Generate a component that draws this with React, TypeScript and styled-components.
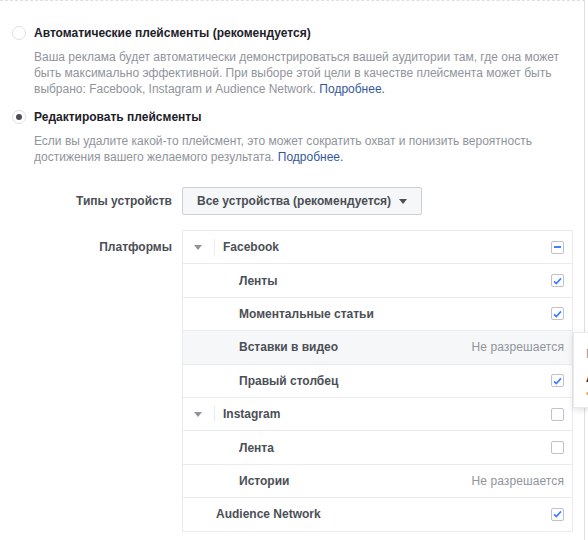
import React from 'react';
import styled, { createGlobalStyle } from 'styled-components';

const GlobalStyle = createGlobalStyle`
  html, body {
    margin: 0;
    padding: 0;
    background: #fff;
    overflow: hidden;
  }
  body {
    font-family: "Liberation Sans", Arial, Helvetica, sans-serif;
    font-size: 12px;
    color: #1d2129;
  }
`;

const Card = styled.div`
  position: relative;
  width: 585px;
  height: 540px;
  box-sizing: border-box;
  border-top: 1px dashed #dddfe2;
  border-right: 1px solid #dddfe2;
  padding-top: 24px;
`;

const Option = styled.div<{ gap?: number }>`
  display: flex;
  flex-direction: column;
  padding-left: 34px;
  margin-top: ${p => p.gap ?? 0}px;
`;

const OptionHead = styled.label`
  position: relative;
  display: flex;
  align-items: center;
  height: 16px;
  line-height: 16px;
  font-weight: bold;
  color: #1d2129;
`;

const Radio = styled.span<{ checked?: boolean }>`
  position: absolute;
  left: -22px;
  top: 1px;
  width: 12px;
  height: 12px;
  border-radius: 50%;
  border: 1px solid #dddfe2;
  background: #fff;
  display: flex;
  align-items: center;
  justify-content: center;

  &::after {
    content: '';
    display: ${p => (p.checked ? 'block' : 'none')};
    width: 6px;
    height: 6px;
    border-radius: 50%;
    background: #4b4f56;
  }
`;

const Description = styled.div`
  margin-top: 8px;
  line-height: 16px;
  color: #90949c;
  padding-right: 12px;
`;

const Link = styled.a`
  color: #365899;
  text-decoration: none;
`;

const FormRow = styled.div<{ gap?: number }>`
  display: flex;
  align-items: flex-start;
  gap: 10px;
  margin-top: ${p => p.gap ?? 0}px;
`;

const FieldLabel = styled.div<{ top?: number }>`
  width: 172px;
  flex-shrink: 0;
  text-align: right;
  font-weight: bold;
  color: #4b4f56;
  line-height: 16px;
  padding-top: ${p => p.top ?? 0}px;
`;

const Dropdown = styled.button`
  display: flex;
  align-items: center;
  justify-content: flex-start;
  gap: 8px;
  height: 28px;
  box-sizing: border-box;
  padding: 0 14px;
  border: 1px solid #ccd0d5;
  border-radius: 2px;
  background: #f6f7f9;
  font-family: inherit;
  font-size: 12px;
  font-weight: bold;
  color: #4b4f56;
  white-space: nowrap;
  cursor: pointer;
`;

const DownCaret = styled.span<{ color?: string }>`
  width: 0;
  height: 0;
  border-left: 4.5px solid transparent;
  border-right: 4.5px solid transparent;
  border-top: 5px solid ${p => p.color ?? '#4b4f56'};
`;

const Table = styled.div`
  width: 391px;
  border: 1px solid #e9ebee;
  border-bottom: none;
  box-sizing: border-box;
`;

const Row = styled.div<{ indent: number; disabled?: boolean }>`
  display: flex;
  align-items: center;
  height: 33.4px;
  box-sizing: border-box;
  border-bottom: 1px solid #e9ebee;
  padding-left: ${p => p.indent}px;
  padding-right: 8px;
  background: ${p => (p.disabled ? '#f6f7f9' : '#fff')};
`;

const Toggle = styled.span`
  display: flex;
  align-items: center;
  width: 20px;
  height: 16px;
  border-right: 1px solid #e9ebee;
  margin-right: 8px;
`;

const RowLabel = styled.span`
  flex: 1;
  font-weight: bold;
  color: #4b4f56;
`;

const NotAllowed = styled.span`
  color: #90949c;
  letter-spacing: 0.1px;
`;

const Box = styled.span`
  width: 13px;
  height: 13px;
  box-sizing: border-box;
  border: 1px solid #bec2c9;
  border-radius: 2px;
  background: #fff;
  display: flex;
  align-items: center;
  justify-content: center;
`;

const Popup = styled.div`
  position: absolute;
  left: 573px;
  top: 331px;
  width: 260px;
  height: 76px;
  box-sizing: border-box;
  padding: 13px 12px;
  background: #fff;
  border: 1px solid #e9ebee;
  box-shadow: 0 2px 6px rgba(0, 0, 0, 0.12);
  line-height: 16px;
`;

const PopupHint = styled.div`
  color: #90949c;
  margin-bottom: 8px;
`;

const PopupTitle = styled.div`
  font-weight: bold;
  color: #1d2129;
`;

const PopupWarn = styled.div`
  color: #f7923b;
  font-size: 11px;
  line-height: 14px;
`;

type State = 'checked' | 'unchecked' | 'mixed' | 'na';

interface Item {
  label: string;
  level: 'group' | 'sub' | 'top';
  state: State;
  shaded?: boolean;
}

const items: Item[] = [
  { label: 'Facebook', level: 'group', state: 'mixed' },
  { label: 'Ленты', level: 'sub', state: 'checked' },
  { label: 'Моментальные статьи', level: 'sub', state: 'checked' },
  { label: 'Вставки в видео', level: 'sub', state: 'na', shaded: true },
  { label: 'Правый столбец', level: 'sub', state: 'checked' },
  { label: 'Instagram', level: 'group', state: 'unchecked' },
  { label: 'Лента', level: 'sub', state: 'unchecked' },
  { label: 'Истории', level: 'sub', state: 'na' },
  { label: 'Audience Network', level: 'top', state: 'checked' },
];

const Check: React.FC<{ state: State }> = ({ state }) => {
  if (state === 'na') return <NotAllowed>Не разрешается</NotAllowed>;
  return (
    <Box>
      {state === 'checked' && (
        <svg width="9" height="8" viewBox="0 0 9 8">
          <path d="M1 4.4 L3.3 6.5 L8 1.4" fill="none" stroke="#4080ff" strokeWidth="1.7" />
        </svg>
      )}
      {state === 'mixed' && (
        <svg width="7" height="2" viewBox="0 0 7 2">
          <rect width="7" height="2" fill="#4080ff" />
        </svg>
      )}
    </Box>
  );
};

const indentFor = { group: 11, sub: 56, top: 33 };

const App: React.FC = () => {
  return (
    <>
      <GlobalStyle />
      <Card>
        <Option>
          <OptionHead>
            <Radio />
            Автоматические плейсменты (рекомендуется)
          </OptionHead>
          <Description>
            Ваша реклама будет автоматически демонстрироваться вашей аудитории там, где она может
            быть максимально эффективной. При выборе этой цели в качестве плейсмента может быть
            выбрано: Facebook, Instagram и Audience Network. <Link>Подробнее.</Link>
          </Description>
        </Option>

        <Option gap={12}>
          <OptionHead>
            <Radio checked />
            Редактировать плейсменты
          </OptionHead>
          <Description>
            Если вы удалите какой-то плейсмент, это может сократить охват и понизить вероятность
            достижения вашего желаемого результата. <Link>Подробнее.</Link>
          </Description>
        </Option>

        <FormRow gap={22}>
          <FieldLabel top={6}>Типы устройств</FieldLabel>
          <Dropdown>
            Все устройства (рекомендуется)
            <DownCaret />
          </Dropdown>
        </FormRow>

        <FormRow gap={15}>
          <FieldLabel top={9}>Платформы</FieldLabel>
          <Table>
            {items.map(item => (
              <Row key={item.label} indent={indentFor[item.level]} disabled={item.shaded}>
                {item.level === 'group' && (
                  <Toggle>
                    <DownCaret color="#90949c" />
                  </Toggle>
                )}
                <RowLabel>{item.label}</RowLabel>
                <Check state={item.state} />
              </Row>
            ))}
          </Table>
        </FormRow>

        <Popup>
          <PopupHint>Пример</PopupHint>
          <PopupTitle>Автоматические плейсменты</PopupTitle>
          <PopupWarn>• Недоступно</PopupWarn>
        </Popup>
      </Card>
    </>
  );
};

export default App;
